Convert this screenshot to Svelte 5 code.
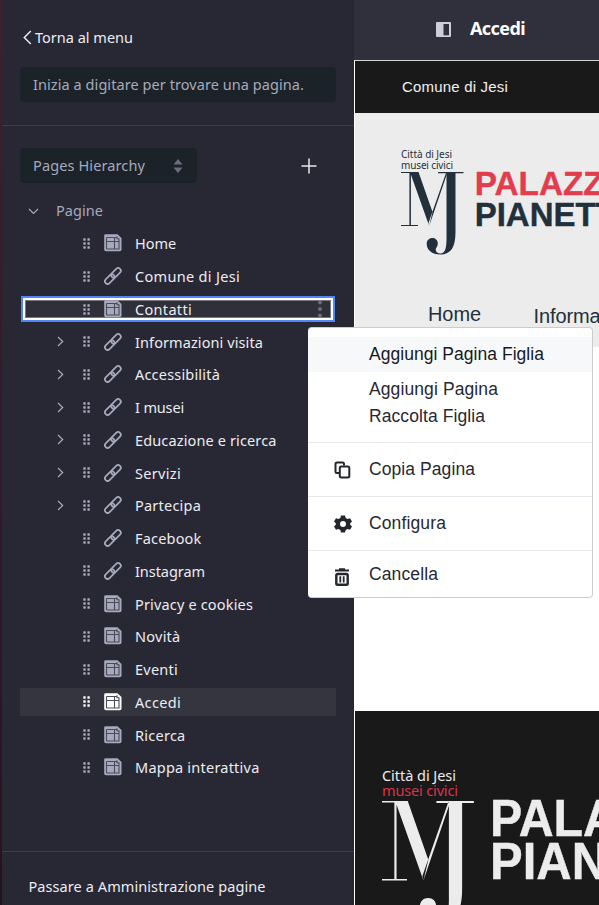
<script>
  const pages = [
    { name: 'Home', width: 41, kind: 'page' },
    { name: 'Comune di Jesi', width: 105, kind: 'link' },
    { name: 'Contatti', width: 57, kind: 'page', focused: true },
    { name: 'Informazioni visita', width: 128, kind: 'link', children: true },
    { name: 'Accessibilità', width: 85, kind: 'link', children: true },
    { name: 'I musei', width: 49, kind: 'link', children: true },
    { name: 'Educazione e ricerca', width: 141.5, kind: 'link', children: true },
    { name: 'Servizi', width: 46, kind: 'link', children: true },
    { name: 'Partecipa', width: 66, kind: 'link', children: true },
    { name: 'Facebook', width: 66.5, kind: 'link' },
    { name: 'Instagram', width: 70, kind: 'link' },
    { name: 'Privacy e cookies', width: 118, kind: 'page' },
    { name: 'Novità', width: 45.5, kind: 'page' },
    { name: 'Eventi', width: 43, kind: 'page' },
    { name: 'Accedi', width: 46, kind: 'page', active: true },
    { name: 'Ricerca', width: 50.5, kind: 'page' },
    { name: 'Mappa interattiva', width: 124.5, kind: 'page' }
  ];

  // Spreads the letters of a label so that it fills the given width.
  function fit(node, width) {
    const natural = node.getBoundingClientRect().width;
    node.style.letterSpacing = `${(width - natural) / node.textContent.length}px`;
  }
</script>

{#snippet monogram()}
  <path d="M0 0H17.500V1.100H0ZM0 53H17V54H0ZM8.400 0H9.900V54H8.400ZM9 0H17.500L31.500 40L28.200 54ZM28.200 54L46.300 1H45L27.500 51ZM37 0H62.500V1.300H37Z" />
  <path d="M45.500 0H54.500V60C54.500 75 50 82.500 39.500 82.500C30.500 82.500 25.700 77.500 25.700 72C25.700 68.500 28 66 31.300 66C35 66 36.800 68.500 36.800 71.500C36.800 74.500 34.800 75.700 34.700 77.500C34.700 80 37 81.500 39.500 81.500C44 81.500 45.500 76 45.500 67Z" />
{/snippet}

<div class="screen">
  <div class="edge"></div>
  <aside>
    <div class="top">
      <div class="back">
        <svg width="9" height="15" viewBox="0 0 9 15"><path d="M7.800 1L1.300 7.500L7.800 14" /></svg>
        <span use:fit={98}>Torna al menu</span>
      </div>
      <div class="search"><span use:fit={271}>Inizia a digitare per trovare una pagina.</span></div>
    </div>
    <div class="tools">
      <div class="select">
        <span use:fit={112}>Pages Hierarchy</span>
        <svg width="10" height="14" viewBox="0 0 10 14"><path d="M5 0L9.500 5.500H.5ZM5 14L.5 8.500H9.500Z" /></svg>
      </div>
      <svg class="plus" width="16" height="16" viewBox="0 0 16 16"><path d="M8 .5V15.500M.5 8H15.500" /></svg>
    </div>
    <div class="root">
      <svg width="11" height="7" viewBox="0 0 11 7"><path d="M1 1L5.500 5.500L10 1" /></svg>
      <span use:fit={47}>Pagine</span>
    </div>
    <div class="tree">
      {#each pages as p}
        <div class="row" class:active={p.active} class:focused={p.focused}>
          <span class="caret">
            {#if p.children}<svg width="7" height="11" viewBox="0 0 7 11"><path d="M1 1L5.700 5.500L1 10" /></svg>{/if}
          </span>
          <svg class="grip" width="8" height="11" viewBox="0 0 8 11">
            {#each [0, 4, 8] as y}<rect x="0.300" y={y + 0.3} width="2.400" height="2.400" rx=".4" /><rect x="4.400" y={y + 0.3} width="2.400" height="2.400" rx=".4" />{/each}
          </svg>
          {#if p.kind === 'page'}
            <svg class="icon" width="18" height="18" viewBox="0 0 18 18">
              <path class="fill" d="M1.500 .3H13.500L17.500 4V15.500Q17.500 17.300 15.700 17.300H2Q.2 17.300 .2 15.500V1.700Q.2.3 1.500 .3Z" />
              <path class="cut" d="M2.500 3.500H12.500M2.500 15V3.500M2.500 15H15V5M2.500 7.500H15M10.500 3.500V15M13 2.300V4.700H15.500" />
            </svg>
          {:else}
            <svg class="icon" width="18" height="18" viewBox="0 0 18 18">
              <g class="chain" transform="rotate(-45 9 9)"><rect x="-1.200" y="6.200" width="11.400" height="5.400" rx="2.700" /><rect x="7.600" y="6.200" width="11.400" height="5.400" rx="2.700" /></g>
            </svg>
          {/if}
          <span class="name"><span use:fit={p.width}>{p.name}</span></span>
          {#if p.focused}
            <svg class="dots" width="4" height="18" viewBox="0 0 4 18"><circle cx="2" cy="2.500" r="2" /><circle cx="2" cy="9" r="2" /><circle cx="2" cy="15.500" r="2" /></svg>
          {/if}
        </div>
      {/each}
    </div>
    <div class="admin"><span use:fit={237}>Passare a Amministrazione pagine</span></div>
  </aside>

  <main>
    <header>
      <svg width="15" height="15" viewBox="0 0 15 15"><rect width="15" height="15" rx="1" fill="#cdcddb" /><rect x="7.500" y="2" width="5.500" height="11.300" fill="#30303c" /></svg>
      <b use:fit={55}>Accedi</b>
    </header>
    <div class="site">
      <div class="bar"><span use:fit={106}>Comune di Jesi</span></div>
      <div class="banner">
        <svg class="logo" width="198" height="115" viewBox="0 0 198 115">
          <text x="0" y="18.200" font-size="10" textLength="51" fill="#26323e" class="small">Città di Jesi</text>
          <text x="0" y="28.500" font-size="10" textLength="52" fill="#26323e" class="small">musei civici</text>
          <g transform="translate(0 32)" fill="#22303c">{@render monogram()}</g>
          <text x="73.700" y="55.300" font-size="34" textLength="129" lengthAdjust="spacingAndGlyphs" fill="#e23d4d" stroke="#e23d4d" class="big">PALAZZ</text>
          <text x="73.700" y="85.500" font-size="34" textLength="141" lengthAdjust="spacingAndGlyphs" fill="#22303c" stroke="#22303c" class="big">PIANETT</text>
        </svg>
        <nav><span use:fit={53}>Home</span><span class="info" use:fit={67}>Informa</span></nav>
      </div>
      <div class="blank"></div>
      <footer>
        <svg class="logo" width="217" height="140" viewBox="0 0 217 140">
          <text x="0" y="16.700" font-size="14.500" textLength="74" fill="#ececec" class="small">Città di Jesi</text>
          <text x="0" y="31.500" font-size="14.500" textLength="76" fill="#d9344b" class="small">musei civici</text>
          <g transform="translate(0 37) scale(1.47)" fill="#ececec">{@render monogram()}</g>
          <text x="108" y="71.500" font-size="51" textLength="128" lengthAdjust="spacingAndGlyphs" fill="#ececec" stroke="#ececec" class="big">PALA</text>
          <text x="108" y="115.200" font-size="51" textLength="117" lengthAdjust="spacingAndGlyphs" fill="#ececec" stroke="#ececec" class="big">PIAN</text>
        </svg>
      </footer>
    </div>
  </main>

  <div class="menu">
    <div class="item hover"><i></i><span use:fit={175}>Aggiungi Pagina Figlia</span></div>
    <div class="item double"><i></i><div><span use:fit={129}>Aggiungi Pagina</span><br /><span use:fit={116}>Raccolta Figlia</span></div></div>
    <div class="item ruled">
      <i><svg width="17" height="18" viewBox="0 0 17 18"><path d="M5.500 12H3Q1.500 12 1.500 10.500V3Q1.500 1.500 3 1.500H8.500Q10 1.500 10 3V4.500" /><rect x="5.800" y="5.500" width="9.500" height="11" rx="1.500" /></svg></i>
      <span use:fit={106}>Copia Pagina</span>
    </div>
    <div class="item ruled">
      <i><svg width="18" height="18" viewBox="0 0 18 18"><path fill="#24262c" stroke="none" fill-rule="evenodd" d="M7 .5H11L11.700 3L13.500 4L16 3.300L18 6.500L16.200 8.300V9.700L18 11.500L16 14.700L13.500 14L11.700 15L11 17.500H7L6.300 15L4.500 14L2 14.700L0 11.500L1.800 9.700V8.300L0 6.500L2 3.300L4.500 4L6.300 3ZM9 6A3 3 0 1 0 9 12A3 3 0 1 0 9 6Z" /></svg></i>
      <span use:fit={77}>Configura</span>
    </div>
    <div class="item ruled last">
      <i><svg width="16" height="18" viewBox="0 0 16 18"><path d="M1 2.500H15M5 1.200H11" /><rect x="2.300" y="6" width="11.400" height="10.800" rx="1.300" stroke-width="2.400" /><path d="M6.300 8.300V14.500M9.700 8.300V14.500" stroke-width="1.800" /></svg></i>
      <span use:fit={69}>Cancella</span>
    </div>
  </div>
</div>

<style>
  .screen { position: relative; display: flex; width: 599px; height: 905px; overflow: hidden; background: #fff; font-family: 'Noto Sans', sans-serif; }
  span, b { white-space: nowrap; }
  svg { display: block; flex: none; overflow: visible; }
  .edge { width: 2px; background: linear-gradient(#451e28, #30182b 60%, #24141f); flex: none; }
  aside { width: 352px; flex: none; background: #282834; color: #ececf2; font-size: 14.500px; display: flex; flex-direction: column; box-sizing: border-box; }
  .top { height: 126px; box-sizing: border-box; border-bottom: 1px solid #3b3b49; padding: 27px 18px 0; }
  .back { display: flex; align-items: center; height: 21px; gap: 3px; padding-left: 3px; }
  .back span { padding-bottom: 2px; }
  .back svg path, .plus path { fill: none; stroke: #e8e8f0; stroke-width: 1.500; }
  .search, .select { background: #1c2328; border-radius: 4px; color: #a7a9bc; height: 35px; display: flex; align-items: center; padding: 0 13px; box-sizing: border-box; }
  .search span, .select span { padding-bottom: 2px; }
  .search { margin-top: 19px; }
  .tools { height: 57px; padding: 22px 18px 0; display: flex; box-sizing: border-box; }
  .select { width: 177px; justify-content: space-between; padding-right: 14px; }
  .select path { fill: #6b6c7e; }
  .plus { margin: 10px 0 0 104px; }
  .root { display: flex; align-items: center; height: 28px; margin-top: 14px; padding-left: 26px; gap: 17px; color: #a7a9bc; flex: none; }
  .root span { padding-bottom: 2px; }
  .root path, .caret path { fill: none; stroke: #a7a9bc; stroke-width: 1.200; }
  .tree { padding: 4px 18px 0; flex: 1; display: flex; flex-direction: column; }
  .row { display: flex; align-items: center; height: 28.750px; flex: none; margin-bottom: 4px; padding-left: 37px; color: #a7a9bc; }
  .caret { width: 26px; }
  .grip { fill: #a7a9bc; margin-right: 13px; }
  .icon { width: 18px; height: 18px; }
  .fill { fill: #a7a9bc; }
  .cut { fill: none; stroke: #4b4b5a; stroke-width: 1.100; }
  .chain { fill: none; stroke: #a7a9bc; stroke-width: 1.700; stroke-linecap: round; }
  .name { color: #ececf2; margin-left: 13px; }
  .active { background: #35353f; }
  .active .grip, .active .fill { fill: #fff; }
  .focused { height: 18px; margin: 5.500px 5px 9.250px; padding-left: 32px; background: #30303a; box-shadow: inset 0 0 0 1px #777880, 0 0 0 2px #fff, 0 0 0 4px #5286f5; }
  .dots { fill: #6b6c7e; margin-left: auto; margin-right: 9.500px; }
  .admin { height: 54px; box-sizing: border-box; border-top: 1px solid #3b3b49; padding: 24px 0 0 26.500px; }
  main { width: 245px; display: flex; flex-direction: column; }
  header { height: 60px; box-sizing: border-box; background: #30303c; color: #fff; display: flex; align-items: center; padding: 0 0 2px 82px; gap: 19px; font-size: 18px; }
  header b { padding-bottom: 2px; }
  .site { flex: 1; border-left: 1px solid #fff; border-top: 1px solid #d4d4d7; font-family: 'Liberation Sans', Arial, sans-serif; }
  .bar { height: 52px; background: #191919; color: #f0f0f0; font-size: 15px; line-height: 52px; padding-left: 47px; }
  .banner { height: 234px; background: #ececec; padding-left: 46px; overflow: hidden; box-sizing: border-box; padding-top: 27px; }
  .small { font-family: 'Noto Sans', sans-serif; }
  .big { font-family: 'Liberation Sans', Arial, sans-serif; font-weight: bold; stroke-width: .4; }
  nav { display: flex; gap: 52.500px; padding-left: 27px; margin-top: 47px; font-size: 20px; line-height: 24px; color: #22303c; }
  .info { margin-top: 2px; }
  .blank { height: 364px; background: #fff; }
  footer { height: 194px; background: #191919; padding: 53px 0 0 27px; box-sizing: border-box; overflow: hidden; }
  .menu { position: absolute; left: 308px; top: 327px; width: 285px; height: 271px; box-sizing: border-box; background: #fff; border: 1px solid #ccc; border-left: 0; border-radius: 4px; padding-top: 9px; color: #272833; font: 17.500px/27px 'Liberation Sans', Arial, sans-serif; overflow: hidden; }
  .item { display: flex; align-items: center; padding-left: 26px; }
  .item i { width: 35px; }
  .item i svg { fill: none; stroke: #24262c; stroke-width: 2; }
  .hover { height: 35px; background: #f7f8fa; color: #17181f; }
  .double { height: 70px; box-sizing: border-box; padding-bottom: 10px; padding-top: 2px; }
  .ruled { height: 54px; box-sizing: border-box; border-top: 1px solid #e7e7ed; }
  .last { height: 47px; }
  .last i svg { margin-top: 5px; }
</style>
